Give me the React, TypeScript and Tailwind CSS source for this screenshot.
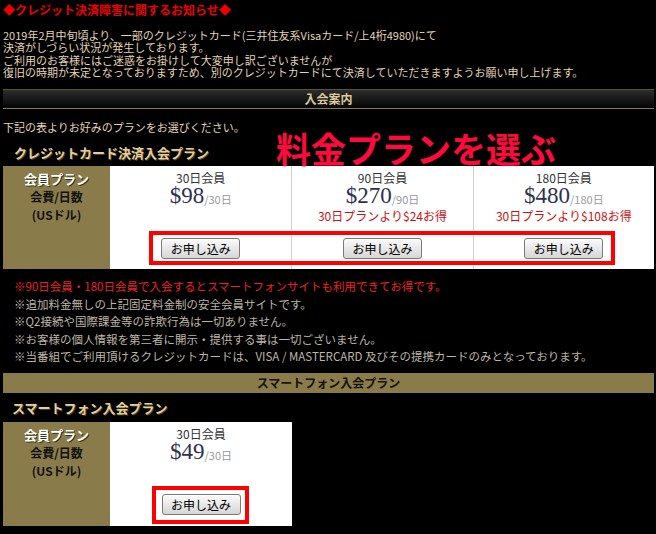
const PLANS = [
  { days: "30日会員", price: "$98", per: "/30日", deal: "" },
  { days: "90日会員", price: "$270", per: "/90日", deal: "30日プランより$24お得" },
  { days: "180日会員", price: "$480", per: "/180日", deal: "30日プランより$108お得" },
];

const NOTES = [
  "※追加料金無しの上記固定料金制の安全会員サイトです。",
  "※Q2接続や国際課金等の詐欺行為は一切ありません。",
  "※お客様の個人情報を第三者に開示・提供する事は一切ございません。",
  "※当番組でご利用頂けるクレジットカードは、VISA / MASTERCARD 及びその提携カードのみとなっております。",
];

function ApplyButton() {
  return (
    <button className="h-[21px] w-[79px] rounded-[3px] border border-[#7a7a7a] bg-gradient-to-b from-[#fbfbfb] to-[#d6d6d6] text-[12px] leading-none text-black shadow-[inset_0_1px_0_#fff]">
      お申し込み
    </button>
  );
}

function LabelCell() {
  return (
    <div className="flex w-[107px] shrink-0 flex-col items-center bg-[#8a7c4a] pt-[4px] text-[12px] font-bold leading-[18px]">
      <span className="text-[13px] text-white [text-shadow:1px_1px_0_#3a3218]">会員プラン</span>
      <span className="text-[#111]">会費/日数</span>
      <span className="text-[#111]">(USドル)</span>
    </div>
  );
}

function PlanCell({ plan, first }: { plan: (typeof PLANS)[number]; first?: boolean }) {
  return (
    <div className={`flex flex-1 flex-col ${first ? "" : "border-l border-[#cfcfcf]"}`}>
      <div className="flex h-[62px] flex-col items-center pt-[3px] text-[12px] leading-[18px]">
        <span className="text-[#333]">{plan.days}</span>
        <span className="flex h-[20px] items-end">
          <span className="font-['Liberation_Serif',serif] text-[23px] leading-[22px] text-[#2f2f50]">{plan.price}</span>
          <span className="pb-[1px] text-[11px] leading-[14px] text-[#999]">{plan.per}</span>
        </span>
        {plan.deal && <span className="text-[#cc1010]">{plan.deal}</span>}
      </div>
      <div className="flex flex-1 items-center justify-center">
        <ApplyButton />
      </div>
    </div>
  );
}

function GoldHeading({ children }: { children: string }) {
  return (
    <div className="text-[13px] font-bold leading-[16px] text-[#e4cf9c] [text-shadow:1px_1px_0_#4a3c18]">
      {children}
    </div>
  );
}

export default function App() {
  return (
    <div className="relative min-h-[534px] w-[656px] overflow-hidden bg-black pl-[3px] pr-[2px] font-['Noto_Sans_CJK_JP','Noto_Sans',sans-serif]">
      <div className="pt-[3px] text-[12px] font-bold leading-[14px] text-[#ee0000]">◆クレジット決済障害に関するお知らせ◆</div>

      <div className="mt-[12px] text-[11px] leading-[12px] text-[#e2d4b6]">
        <p>2019年2月中旬頃より、一部のクレジットカード(三井住友系Visaカード/上4桁4980)にて</p>
        <p>決済がしづらい状況が発生しております。</p>
        <p className="mt-[1px]">ご利用のお客様にはご迷惑をお掛けして大変申し訳ございませんが</p>
        <p>復旧の時期が未定となっておりますため、別のクレジットカードにて決済していただきますようお願い申し上げます。</p>
      </div>

      <div className="mt-[11px] flex h-[20px] items-center justify-center border-y border-t-[#5e5232] border-b-[#8a7a50] bg-gradient-to-b from-[#2e2e2e] to-[#050505] text-[12px] font-bold text-[#dcc89c]">
        入会案内
      </div>

      <div className="mt-[11px] text-[11px] leading-[14px] text-[#e2d4b6]">下記の表よりお好みのプランをお選びください。</div>

      <div className="mt-[11px] pl-[11px]">
        <GoldHeading>クレジットカード決済入会プラン</GoldHeading>
      </div>

      <div className="mt-[5px] flex h-[103px]">
        <LabelCell />
        <div className="grid flex-1 grid-cols-3 bg-white">
          {PLANS.map((p, i) => (
            <PlanCell key={p.days} plan={p} first={i === 0} />
          ))}
        </div>
      </div>

      <div className="mt-[9px] pl-[11px] text-[11.5px] leading-[17.5px]">
        <p className="text-[#ee2222]">※90日会員・180日会員で入会するとスマートフォンサイトも利用できてお得です。</p>
        {NOTES.map((n) => (
          <p key={n} className="text-[#bdb5a6]">
            {n}
          </p>
        ))}
      </div>

      <div className="mt-[7px] flex h-[20px] items-center justify-center bg-[#8a7c4a] text-[12px] font-bold text-[#161208]">
        スマートフォン入会プラン
      </div>

      <div className="mt-[7px] pl-[9px]">
        <GoldHeading>スマートフォン入会プラン</GoldHeading>
      </div>

      <div className="mt-[6px] flex h-[104px] w-[289px]">
        <LabelCell />
        <div className="flex flex-1 flex-col bg-white">
          <PlanCell plan={{ days: "30日会員", price: "$49", per: "/30日", deal: "" }} first />
        </div>
      </div>

      <div className="pointer-events-none absolute left-[276px] top-[129px] text-[35px] font-bold leading-[37px] text-[#ff0a3c]">
        料金プランを選ぶ
      </div>
      <div className="pointer-events-none absolute left-[149px] top-[231px] h-[34px] w-[466px] border-[4px] border-[#ff0000]" />
      <div className="pointer-events-none absolute left-[152px] top-[486px] h-[38px] w-[97px] border-[4px] border-[#ff0000]" />
    </div>
  );
}
